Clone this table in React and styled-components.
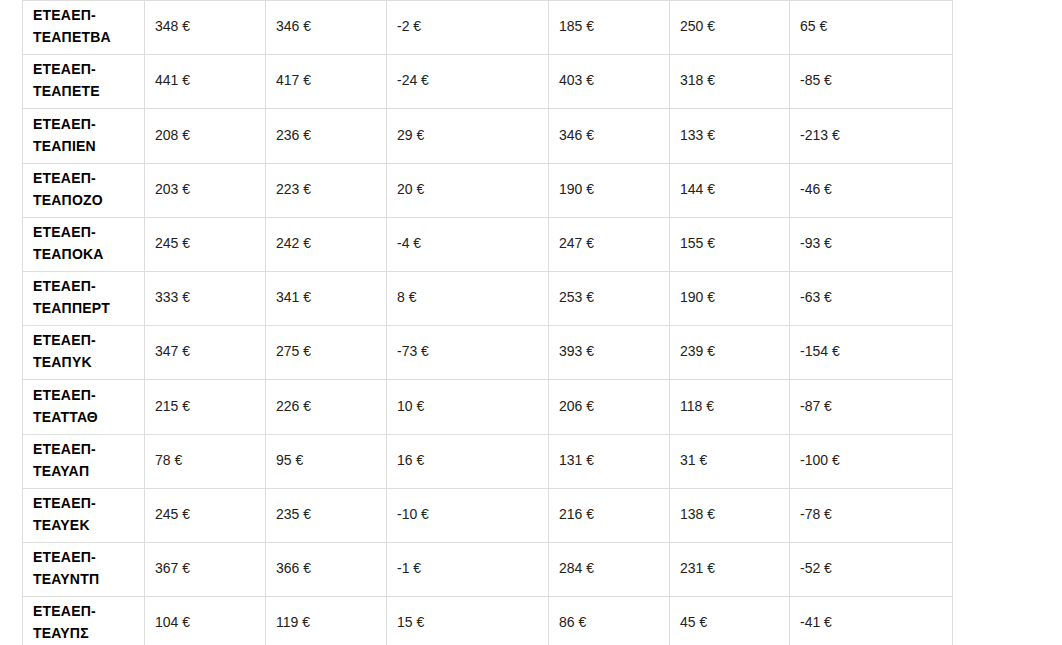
import React from 'react';
import styled, { createGlobalStyle } from 'styled-components';

const GlobalStyle = createGlobalStyle`
  body {
    margin: 0;
    background: #fff;
    font-family: "Liberation Sans", Arial, sans-serif;
    overflow: hidden;
  }
`;

const Page = styled.div`
  padding-left: 22px;
  height: 645px;
  overflow: hidden;
`;

const Table = styled.table`
  border-collapse: collapse;
  table-layout: fixed;
  width: 930px;
  font-size: 14px;
  line-height: 22px;
  color: #222;
`;

const Cell = styled.td`
  border: 1px solid #dddddd;
  padding: 3.2px 10px 6px;
  vertical-align: middle;
  text-align: left;
`;

const NameCell = styled(Cell)`
  font-weight: bold;
  color: #000;
  letter-spacing: 0.2px;
`;

const widths = [122, 121, 121, 162, 121, 120, 163];

const rows = [
  ['ΤΕΑΠΕΤΒΑ', 348, 346, -2, 185, 250, 65],
  ['ΤΕΑΠΕΤΕ', 441, 417, -24, 403, 318, -85],
  ['ΤΕΑΠΙΕΝ', 208, 236, 29, 346, 133, -213],
  ['ΤΕΑΠΟΖΟ', 203, 223, 20, 190, 144, -46],
  ['ΤΕΑΠΟΚΑ', 245, 242, -4, 247, 155, -93],
  ['ΤΕΑΠΠΕΡΤ', 333, 341, 8, 253, 190, -63],
  ['ΤΕΑΠΥΚ', 347, 275, -73, 393, 239, -154],
  ['ΤΕΑΤΤΑΘ', 215, 226, 10, 206, 118, -87],
  ['ΤΕΑΥΑΠ', 78, 95, 16, 131, 31, -100],
  ['ΤΕΑΥΕΚ', 245, 235, -10, 216, 138, -78],
  ['ΤΕΑΥΝΤΠ', 367, 366, -1, 284, 231, -52],
  ['ΤΕΑΥΠΣ', 104, 119, 15, 86, 45, -41],
];

const App = () => {
  return (
    <>
      <GlobalStyle />
      <Page>
        <Table>
          <colgroup>
            {widths.map((w, i) => (
              <col key={i} style={{ width: w }} />
            ))}
          </colgroup>
          <tbody>
            {rows.map(([name, ...values]) => (
              <tr key={name}>
                <NameCell>
                  ΕΤΕΑΕΠ-
                  <br />
                  {name}
                </NameCell>
                {values.map((v, i) => (
                  <Cell key={i}>{v} €</Cell>
                ))}
              </tr>
            ))}
          </tbody>
        </Table>
      </Page>
    </>
  );
};

export default App;
